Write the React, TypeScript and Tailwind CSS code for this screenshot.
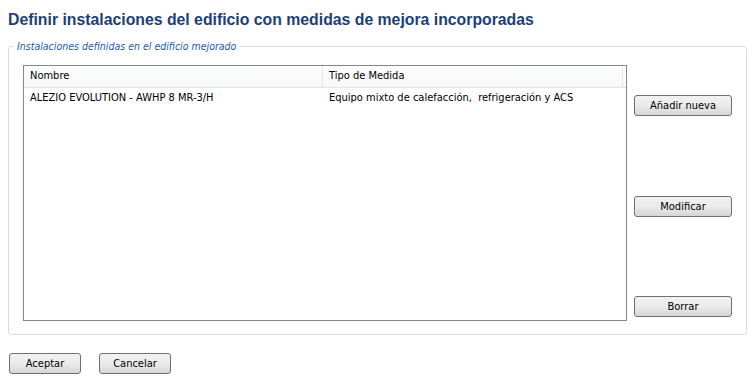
const ui = "font-['DejaVu_Sans_Condensed','DejaVu_Sans',sans-serif]";

function WinButton({ label, className = '' }: { label: string; className?: string }) {
  return (
    <button
      className={`h-[21px] rounded-[3px] border border-[#707070] bg-gradient-to-b from-[#f2f2f2] via-[#ebebeb] to-[#d6d6d6] text-[11px] text-black leading-none ${ui} ${className}`}
    >
      {label}
    </button>
  );
}

const rows = [
  { nombre: 'ALEZIO EVOLUTION - AWHP 8 MR-3/H', tipo: 'Equipo mixto de calefacción,  refrigeración y ACS' },
];

export default function App() {
  return (
    <div className="w-[755px] h-[382px] bg-white overflow-hidden">
      <h1 className="pl-[8px] pt-[10px] h-[40px] text-[15.8px] leading-[20px] font-bold text-[#1b3f7a] font-['Liberation_Sans',Arial,sans-serif]">
        Definir instalaciones del edificio con medidas de mejora incorporadas
      </h1>

      <fieldset className="ml-[8px] w-[739px] h-[295px] border border-[#d5dfe5] rounded-[3px]">
        <legend className={`ml-[5px] px-[3px] text-[10.5px] leading-[13px] italic text-[#1f5aa6] ${ui}`}>
          Instalaciones definidas en el edificio mejorado
        </legend>

        <div className="flex gap-[7px] mt-[12px] ml-[14px]">
          {/* Lista */}
          <div className={`w-[604px] h-[256px] border border-[#828790] bg-white text-[11px] text-black ${ui}`}>
            <div className="flex h-[22px] border-b border-[#e5e5e5] bg-gradient-to-b from-white to-[#f7f8fa]">
              <div className="w-[299px] border-r border-[#e5e5e5] pl-[6px] flex items-center">Nombre</div>
              <div className="w-[300px] border-r border-[#e5e5e5] pl-[6px] flex items-center">Tipo de Medida</div>
              <div className="flex-1" />
            </div>
            {rows.map((r) => (
              <div key={r.nombre} className="flex h-[20px] items-center">
                <div className="w-[299px] pl-[6px] whitespace-pre">{r.nombre}</div>
                <div className="w-[300px] pl-[6px] whitespace-pre">{r.tipo}</div>
              </div>
            ))}
          </div>

          {/* Botones */}
          <div className="flex flex-col pt-[30px]">
            <WinButton label="Añadir nueva" className="w-[98px]" />
            <WinButton label="Modificar" className="w-[98px] mt-[80px]" />
            <WinButton label="Borrar" className="w-[98px] mt-[79px]" />
          </div>
        </div>
      </fieldset>

      <div className="flex gap-[18px] pl-[9px] pt-[18px]">
        <WinButton label="Aceptar" className="w-[72px]" />
        <WinButton label="Cancelar" className="w-[72px]" />
      </div>
    </div>
  );
}
